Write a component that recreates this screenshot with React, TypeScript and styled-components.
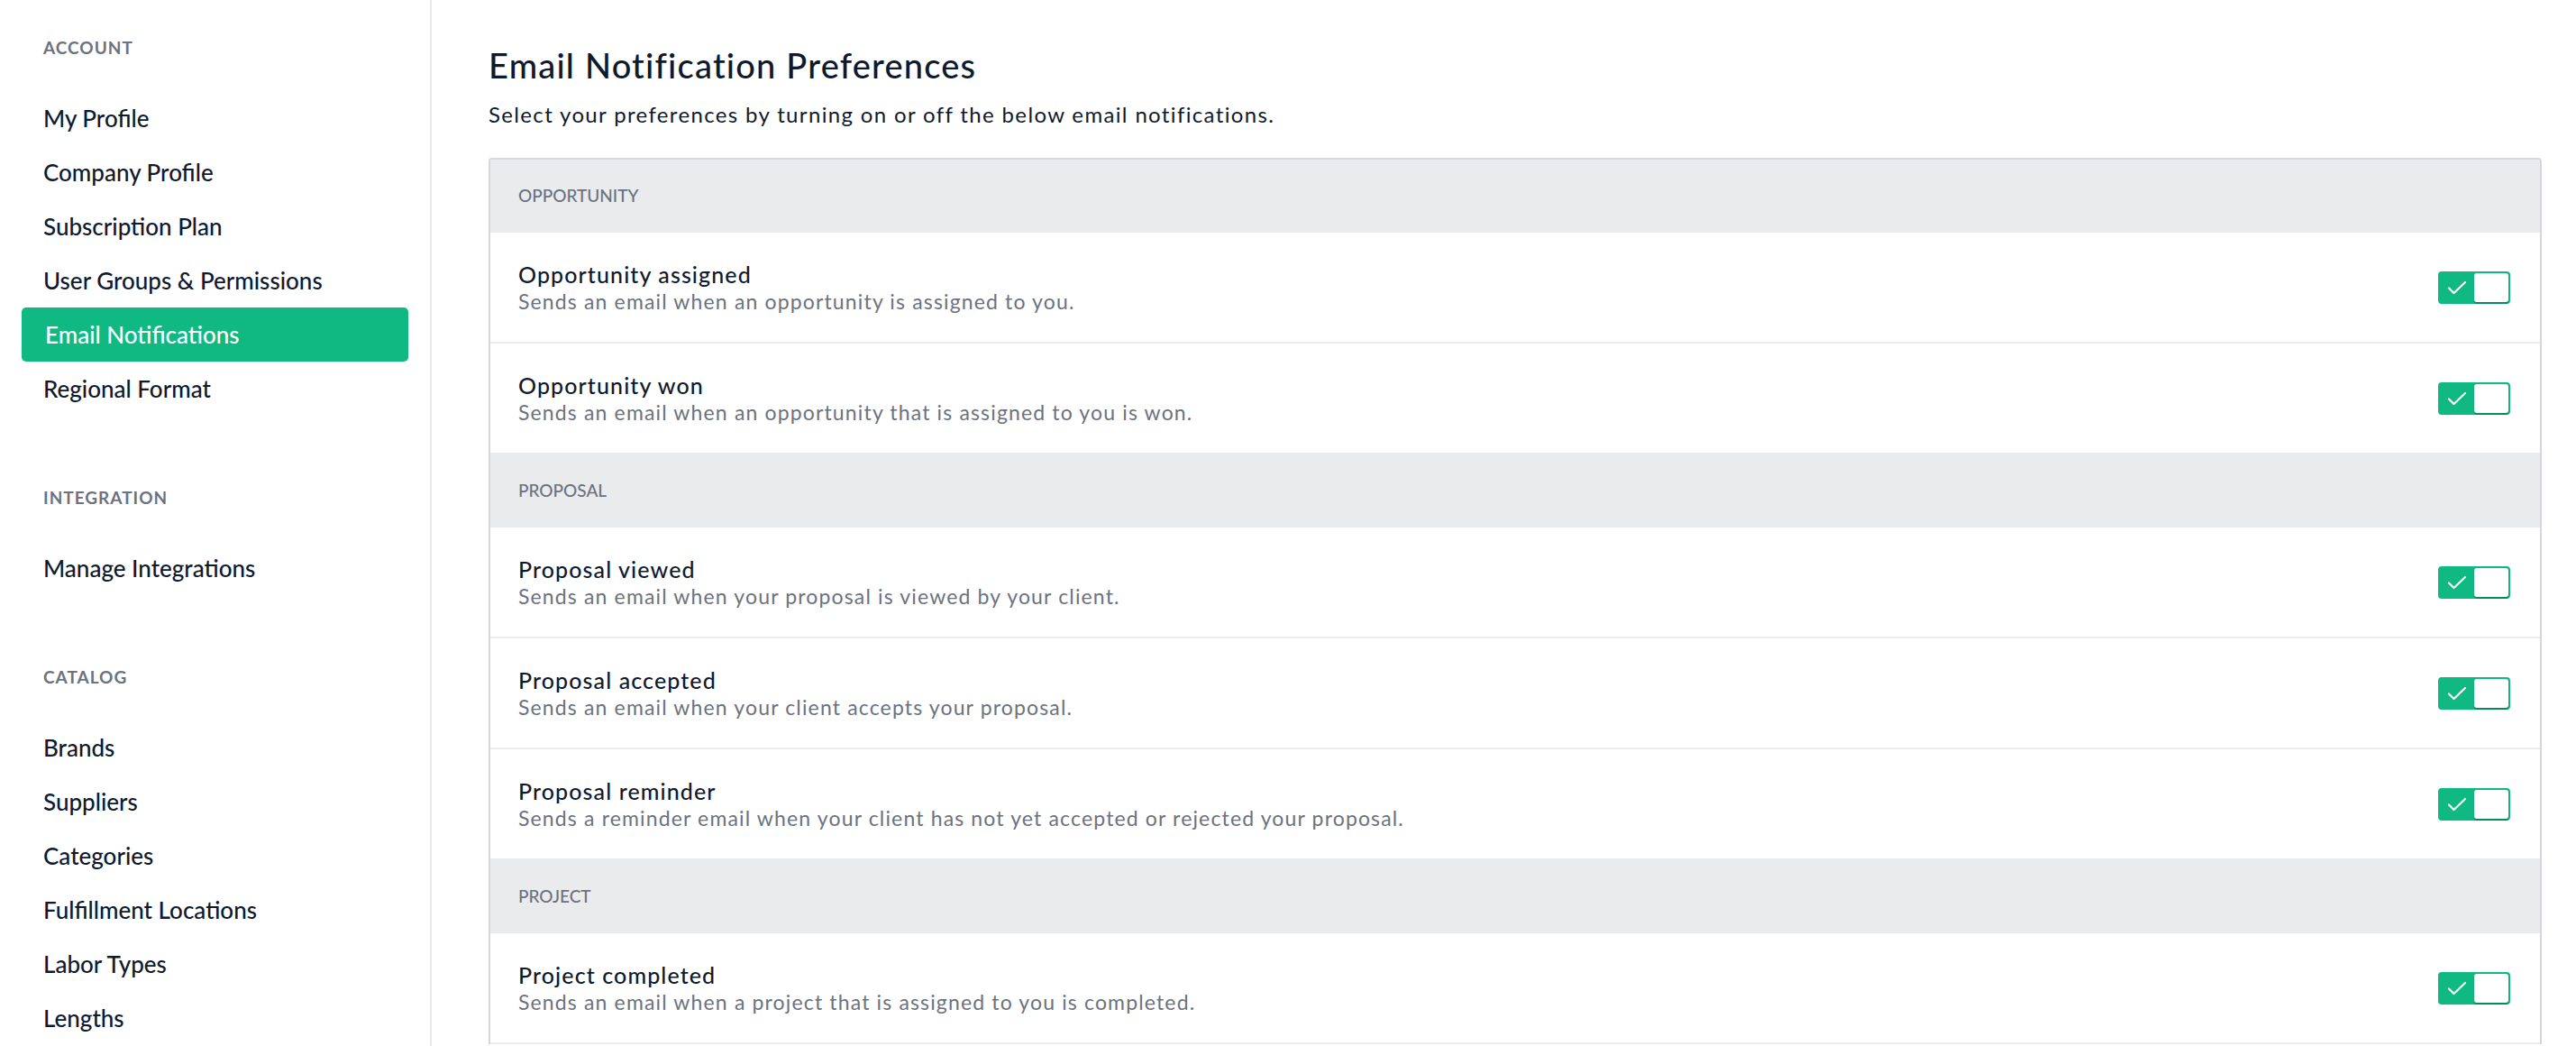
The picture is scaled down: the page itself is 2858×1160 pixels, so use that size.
import React from 'react';
import styled, { createGlobalStyle } from 'styled-components';

const GlobalStyle = createGlobalStyle`
  html, body {
    margin: 0;
    padding: 0;
    background: #ffffff;
    font-family: 'Lato', 'Noto Sans', sans-serif;
    color: #111827;
    overflow: hidden;
  }
  * { box-sizing: border-box; }
`;

interface NavGroup {
  label: string;
  items: string[];
}

interface Pref {
  title: string;
  desc: string;
}

interface PrefSection {
  label: string;
  prefs: Pref[];
}

const navGroups: NavGroup[] = [
  {
    label: 'Account',
    items: ['My Profile', 'Company Profile', 'Subscription Plan', 'User Groups & Permissions', 'Email Notifications', 'Regional Format'],
  },
  { label: 'Integration', items: ['Manage Integrations'] },
  {
    label: 'Catalog',
    items: ['Brands', 'Suppliers', 'Categories', 'Fulfillment Locations', 'Labor Types', 'Lengths'],
  },
];

const sections: PrefSection[] = [
  {
    label: 'Opportunity',
    prefs: [
      { title: 'Opportunity assigned', desc: 'Sends an email when an opportunity is assigned to you.' },
      { title: 'Opportunity won', desc: 'Sends an email when an opportunity that is assigned to you is won.' },
    ],
  },
  {
    label: 'Proposal',
    prefs: [
      { title: 'Proposal viewed', desc: 'Sends an email when your proposal is viewed by your client.' },
      { title: 'Proposal accepted', desc: 'Sends an email when your client accepts your proposal.' },
      { title: 'Proposal reminder', desc: 'Sends a reminder email when your client has not yet accepted or rejected your proposal.' },
    ],
  },
  {
    label: 'Project',
    prefs: [{ title: 'Project completed', desc: 'Sends an email when a project that is assigned to you is completed.' }],
  },
];

export default function App() {
  return (
    <>
      <GlobalStyle />
      <Page>
        <Sidebar>
          {navGroups.map((group) => (
            <Group key={group.label}>
              <GroupLabel>{group.label}</GroupLabel>
              {group.items.map((item) => (
                <NavItem key={item} $active={item === 'Email Notifications'}>
                  {item}
                </NavItem>
              ))}
            </Group>
          ))}
        </Sidebar>
        <Main>
          <Title>Email Notification Preferences</Title>
          <Subtitle>Select your preferences by turning on or off the below email notifications.</Subtitle>
          <Panel>
            {sections.map((section) => (
              <React.Fragment key={section.label}>
                <SectionHeader>{section.label}</SectionHeader>
                {section.prefs.map((pref) => (
                  <PrefRow key={pref.title}>
                    <PrefText>
                      <PrefTitle>{pref.title}</PrefTitle>
                      <PrefDesc>{pref.desc}</PrefDesc>
                    </PrefText>
                    <Toggle>
                      <CheckArea>
                        <svg width="22" height="16" viewBox="0 0 22 16" fill="none">
                          <path d="M2 8.5l5.5 5.5L20 2" stroke="#ffffff" strokeWidth="2.2" strokeLinecap="round" strokeLinejoin="round" />
                        </svg>
                      </CheckArea>
                      <Knob />
                    </Toggle>
                  </PrefRow>
                ))}
              </React.Fragment>
            ))}
          </Panel>
        </Main>
      </Page>
    </>
  );
}

const Page = styled.div`
  display: flex;
  height: 100vh;
  width: 100%;
`;

const Sidebar = styled.nav`
  width: 479px;
  flex-shrink: 0;
  border-right: 2px solid #e8e9eb;
  padding: 38px 24px 0;
  display: flex;
  flex-direction: column;
  gap: 76px;
`;

const Group = styled.div`
  display: flex;
  flex-direction: column;
`;

const GroupLabel = styled.div`
  height: 30px;
  line-height: 30px;
  padding-left: 24px;
  margin-bottom: 33px;
  font-size: 19px;
  font-weight: 700;
  letter-spacing: 1px;
  text-transform: uppercase;
  color: #6b7280;
`;

const NavItem = styled.div<{ $active?: boolean }>`
  height: 60px;
  line-height: 60px;
  padding-left: ${(p) => (p.$active ? '26px' : '24px')};
  border-radius: 5px;
  font-size: 26px;
  font-weight: 500;
  white-space: nowrap;
  color: ${(p) => (p.$active ? '#ffffff' : '#0f1a2e')};
  background: ${(p) => (p.$active ? '#10b981' : 'transparent')};
`;

const Main = styled.main`
  flex: 1;
  padding: 49px 38px 0 63px;
  display: flex;
  flex-direction: column;
`;

const Title = styled.h1`
  margin: 0;
  height: 46px;
  line-height: 46px;
  font-size: 38px;
  font-weight: 500;
  letter-spacing: 1.2px;
  color: #0f1a2e;
`;

const Subtitle = styled.p`
  margin: 17px 0 0;
  height: 30px;
  line-height: 30px;
  font-size: 24px;
  letter-spacing: 1.35px;
  color: #0f1a2e;
`;

const Panel = styled.section`
  margin-top: 33px;
  border: 2px solid #d5d7db;
  border-bottom: none;
  border-radius: 4px 4px 0 0;
  overflow: hidden;
`;

const SectionHeader = styled.div`
  height: 81px;
  display: flex;
  align-items: center;
  padding-left: 31px;
  padding-bottom: 2px;
  background: #eaebed;
  font-size: 19px;
  font-weight: 500;
  text-transform: uppercase;
  color: #6b7280;
`;

const PrefRow = styled.div`
  height: 123px;
  display: flex;
  align-items: center;
  justify-content: space-between;
  padding: 0 33px 0 31px;
  border-bottom: 2px solid #ececee;
  background: #ffffff;
`;

const PrefText = styled.div`
  display: flex;
  flex-direction: column;
`;

const PrefTitle = styled.div`
  line-height: 30px;
  font-size: 25px;
  font-weight: 500;
  letter-spacing: 1.1px;
  color: #0f1a2e;
`;

const PrefDesc = styled.div`
  line-height: 30px;
  font-size: 23px;
  letter-spacing: 1.15px;
  color: #6b7280;
`;

const Toggle = styled.div`
  width: 80px;
  height: 36px;
  border-radius: 4px;
  background: #10b981;
  display: flex;
  align-items: center;
  padding: 2px;
`;

const CheckArea = styled.div`
  flex: 1;
  height: 100%;
  display: flex;
  align-items: center;
  justify-content: center;
`;

const Knob = styled.div`
  width: 38px;
  height: 32px;
  border-radius: 3px;
  background: #ffffff;
  box-shadow: 0 2px 1px rgba(6, 95, 70, 0.55);
`;
